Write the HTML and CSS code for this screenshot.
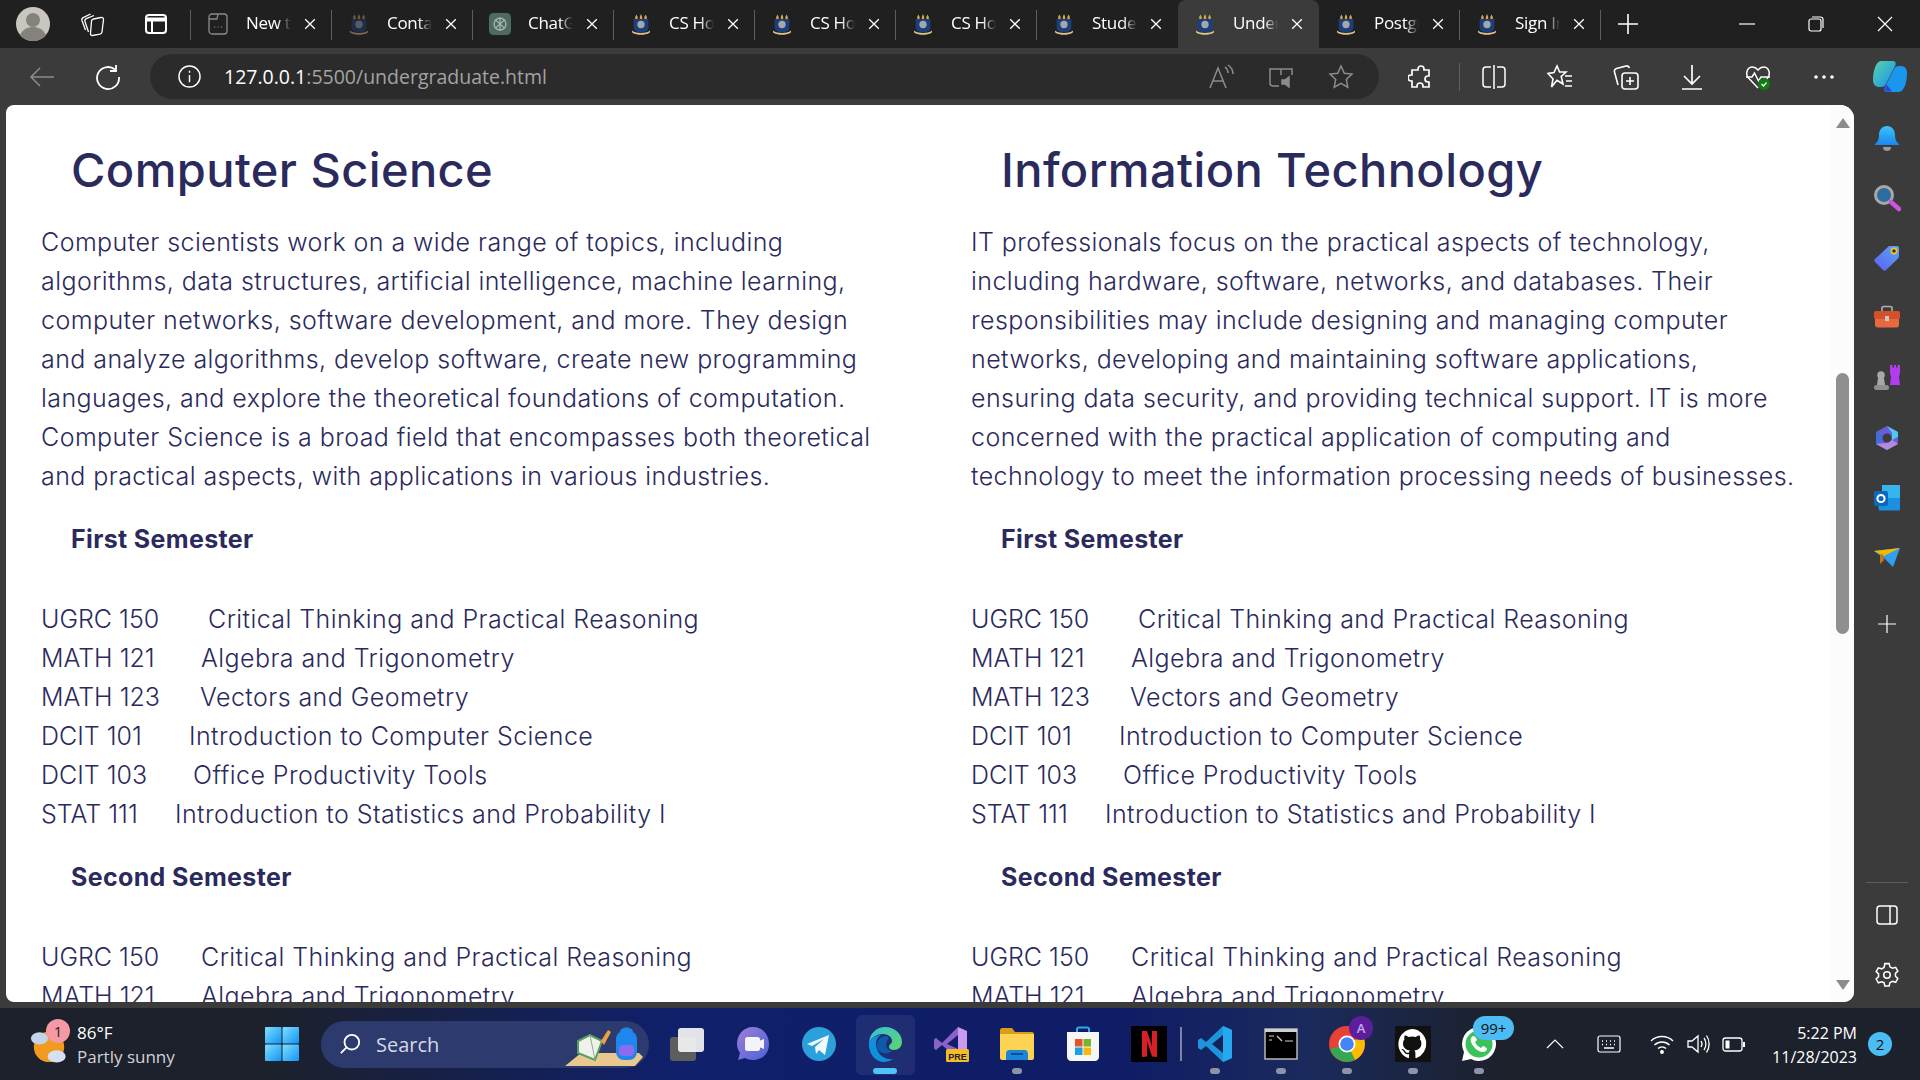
FILE: index.html
```html
<!DOCTYPE html>
<html lang="en">
<head>
<meta charset="utf-8">
<title>Undergraduate</title>
<link rel="stylesheet" href="styles.css">
</head>
<body>
<svg class="sprite" aria-hidden="true">
  <defs>
    <linearGradient id="gBell" x1="0" y1="0" x2="0" y2="1"><stop offset="0" stop-color="#3cc4f7"/><stop offset="1" stop-color="#1a86ee"/></linearGradient>
    <linearGradient id="gTag" x1="1" y1="0" x2="0" y2="1"><stop offset="0" stop-color="#5aa6f6"/><stop offset="1" stop-color="#5f5ff2"/></linearGradient>
    <linearGradient id="gWin" x1="0" y1="0" x2="1" y2="1"><stop offset="0" stop-color="#7fe0ff"/><stop offset="1" stop-color="#0f94f5"/></linearGradient>
    <linearGradient id="gEdge" x1="0" y1="0" x2="1" y2="1"><stop offset="0" stop-color="#35c1d8"/><stop offset="1" stop-color="#5ed66a"/></linearGradient>
    <linearGradient id="gZoom" x1="0" y1="0" x2="1" y2="1"><stop offset="0" stop-color="#9c7fd6"/><stop offset="1" stop-color="#4c62d8"/></linearGradient>
    <linearGradient id="gCop" x1="0" y1="0" x2="1" y2="1"><stop offset="0" stop-color="#56d6a8"/><stop offset="1" stop-color="#1b8cf0"/></linearGradient>
    <symbol id="crest" viewBox="0 0 24 24">
      <path d="M4 6.500h16v9.500c0 3-3.500 5-8 5s-8-2-8-5z" fill="#1c3f7c"/>
      <path d="M7 1.500l1.300 2.500v2.500H5.700V4zM12 1l1.300 3v2.500h-2.600V4zM17 1.500L18.300 4v2.500h-2.600V4z" fill="#d8a64a"/>
      <circle cx="12" cy="12.500" r="4" fill="#a0a8ac"/>
      <path d="M2 19c3 2 6 2.700 10 2.700S19 21 22 19l-.5 2.500c-3 1.500-6 2.200-9.500 2.200s-6.500-.7-9.500-2.200z" fill="#dcc48c"/>
    </symbol>
    <symbol id="x" viewBox="0 0 16 16"><path d="M2.500 2.500l11 11M13.500 2.500l-11 11" fill="none" stroke="#fff" stroke-width="1.500"/></symbol>
  </defs>
</svg>

<header class="tabstrip">
  <div class="lead">
    <span class="btn-avatar">
      <svg class="ic34" viewBox="0 0 34 34"><circle cx="17" cy="17" r="17" fill="#c9c6c0"/><circle cx="17" cy="13" r="7" fill="#85827d"/><path d="M4 28c3-6 8-8 13-8s10 2 13 8c-3 4-8 6-13 6s-10-2-13-6z" fill="#85827d"/></svg>
    </span>
    <span class="btn-work">
      <svg class="ic26" viewBox="0 0 26 26" fill="none" stroke="#fff" stroke-width="1.300"><path d="M13.500 8l7.500-1.500c1.500-.3 2.500.5 2.500 2L22 21c-.2 1.300-1 2-2 2.200L12.500 24.500c-1.300.2-2.200-.7-2-2L11.500 10c.1-1 1-1.800 2-2z"/><path d="M8.500 21L5 10.500c-.4-1.300.2-2.300 1.300-2.800L14 4.500"/><path d="M5.500 19L2 9.500c-.4-1.300.1-2.300 1.200-2.800L10.500 3"/></svg>
    </span>
    <span class="btn-vert">
      <svg class="ic24" viewBox="0 0 24 24" fill="none" stroke="#fff" stroke-width="2"><rect x="2" y="3" width="20" height="18" rx="3"/><path d="M2 7.500h20" stroke-width="4"/><path d="M8 8v13"/></svg>
    </span>
  </div>
  <div class="tab">
    <svg class="favicon" viewBox="0 0 20 24" fill="none" stroke="#8a8a8a" stroke-width="1.300"><rect x="1" y="2" width="18" height="20" rx="3"/><path d="M1 7h8l1-5"/><path d="M6 15h.8M9.600 15h.8M13.200 15h.8" stroke-width="1.600"/></svg>
    <span class="tab-title">New tab</span><svg class="tab-x" viewBox="0 0 16 16"><use href="#x"/></svg>
  </div>
  <div class="tab">
    <svg class="favicon dim" viewBox="0 0 24 24"><use href="#crest"/></svg>
    <span class="tab-title">Contact</span><svg class="tab-x" viewBox="0 0 16 16"><use href="#x"/></svg>
  </div>
  <div class="tab">
    <svg class="favicon" viewBox="0 0 24 24"><rect width="24" height="24" rx="5" fill="#4d6b60"/><g fill="none" stroke="#a9bab3" stroke-width="1.300"><circle cx="12" cy="12" r="6.500"/><path d="M7 7.500l10 9M17 7.500l-10 9M12 4.500v15"/></g></svg>
    <span class="tab-title">ChatGPT</span><svg class="tab-x" viewBox="0 0 16 16"><use href="#x"/></svg>
  </div>
  <div class="tab">
    <svg class="favicon" viewBox="0 0 24 24"><use href="#crest"/></svg>
    <span class="tab-title">CS Home</span><svg class="tab-x" viewBox="0 0 16 16"><use href="#x"/></svg>
  </div>
  <div class="tab">
    <svg class="favicon" viewBox="0 0 24 24"><use href="#crest"/></svg>
    <span class="tab-title">CS Home</span><svg class="tab-x" viewBox="0 0 16 16"><use href="#x"/></svg>
  </div>
  <div class="tab">
    <svg class="favicon" viewBox="0 0 24 24"><use href="#crest"/></svg>
    <span class="tab-title">CS Home</span><svg class="tab-x" viewBox="0 0 16 16"><use href="#x"/></svg>
  </div>
  <div class="tab before-active">
    <svg class="favicon" viewBox="0 0 24 24"><use href="#crest"/></svg>
    <span class="tab-title">Student</span><svg class="tab-x" viewBox="0 0 16 16"><use href="#x"/></svg>
  </div>
  <div class="tab active">
    <svg class="favicon" viewBox="0 0 24 24"><use href="#crest"/></svg>
    <span class="tab-title">Undergraduate</span><svg class="tab-x" viewBox="0 0 16 16"><use href="#x"/></svg>
  </div>
  <div class="tab">
    <svg class="favicon" viewBox="0 0 24 24"><use href="#crest"/></svg>
    <span class="tab-title">Postgraduate</span><svg class="tab-x" viewBox="0 0 16 16"><use href="#x"/></svg>
  </div>
  <div class="tab">
    <svg class="favicon" viewBox="0 0 24 24"><use href="#crest"/></svg>
    <span class="tab-title">Sign In</span><svg class="tab-x" viewBox="0 0 16 16"><use href="#x"/></svg>
  </div>
  <svg class="newtab" viewBox="0 0 22 22"><path d="M11 1v20M1 11h20" stroke="#fff" stroke-width="1.600"/></svg>
  <div class="winctl">
    <svg class="ic16" viewBox="0 0 16 16"><path d="M0 8h16" stroke="#fff" stroke-width="1.200"/></svg>
    <svg class="ic16" viewBox="0 0 16 16" fill="none" stroke="#fff" stroke-width="1.200"><rect x="1" y="3" width="12" height="12" rx="2"/><path d="M4 1h8.500A2.500 2.500 0 0 1 15 3.500V12"/></svg>
    <svg class="ic16" viewBox="0 0 16 16"><path d="M1 1l14 14M15 1L1 15" stroke="#fff" stroke-width="1.200"/></svg>
  </div>
</header>

<nav class="toolbar">
  <span class="tb"><svg class="ic26" viewBox="0 0 26 26" fill="none" stroke="#8c8c8c" stroke-width="1.500"><path d="M25 13H2M11 4l-9 9 9 9"/></svg></span>
  <span class="tb"><svg class="ic26" viewBox="0 0 26 26" fill="none" stroke="#fff" stroke-width="1.800"><path d="M20 5.500A11 11 0 1 0 24 13"/><path d="M21 1v6h-6"/></svg></span>
  <div class="address">
    <svg class="info" viewBox="0 0 24 24" fill="none" stroke="#fff" stroke-width="1.500"><circle cx="12" cy="12" r="11"/><path d="M12 10.500V18M12 6v2"/></svg>
    <span class="url"><span class="host">127.0.0.1</span>:5500/undergraduate.html</span>
    <span class="addr-btn"><svg class="ic26" viewBox="0 0 26 26" fill="none" stroke="#8c8c8c" stroke-width="1.500"><path d="M2 24L10 4l8 20M5 17h10M17 3c2 1.500 3 3.500 3 6M20 1c3 2 5 5 5 9"/></svg></span>
    <span class="addr-btn"><svg class="ic26" viewBox="0 0 26 26" fill="none" stroke="#8c8c8c" stroke-width="1.500"><path d="M11 22H5a3 3 0 0 1-3-3V5h22v6M13 5v6"/><path d="M14 16h3l4-3v10l-4-3h-3z" fill="#8c8c8c"/></svg></span>
    <span class="addr-btn"><svg class="ic26" viewBox="0 0 26 26" fill="none" stroke="#8c8c8c" stroke-width="1.500"><path d="M13 2l3.300 7.200 7.700.9-5.700 5.300 1.500 7.800L13 19.300 6.200 23.200l1.500-7.800L2 10.100l7.700-.9z"/></svg></span>
  </div>
  <span class="tb ext"><svg class="ic26" viewBox="0 0 26 26" fill="none" stroke="#fff" stroke-width="1.700"><path d="M10 5a3 3 0 0 1 6 0v1h5v6h-1a3 3 0 0 0 0 6h1v5h-6v-1a3 3 0 0 0-6 0v1H4v-6H3a3 3 0 0 1 0-6h1V6h6z"/></svg></span>
  <span class="tb-sep"></span>
  <span class="tb"><svg class="ic26" viewBox="0 0 26 26" fill="none" stroke="#fff" stroke-width="1.500"><path d="M10 3H5a3 3 0 0 0-3 3v14a3 3 0 0 0 3 3h5M16 3h5a3 3 0 0 1 3 3v14a3 3 0 0 1-3 3h-5M13 1v24"/></svg></span>
  <span class="tb"><svg class="ic26" viewBox="0 0 26 26" fill="none" stroke="#fff" stroke-width="1.600"><path d="M10 2l2.600 6H19l-4.800 4.500L16 20l-6-3.700L4.500 23l1.500-8L1 9.500l6-1zM18 12h7M19 17h6M18 22h7"/></svg></span>
  <span class="tb"><svg class="ic26" viewBox="0 0 26 26" fill="none" stroke="#fff" stroke-width="1.600"><rect x="9" y="9" width="16" height="16" rx="3"/><path d="M17 13v8M13 17h8M5 21L1.500 8C1 6 2 5 3.500 4.500L13 2c1.500-.3 3 .5 3.500 2"/></svg></span>
  <span class="tb"><svg class="ic26" viewBox="0 0 26 26" fill="none" stroke="#fff" stroke-width="1.700"><path d="M13 1v18M5 12l8 8 8-8M3 25h20"/></svg></span>
  <span class="tb"><svg class="ic26" viewBox="0 0 26 26"><path d="M13 24L3.500 14C0 10 2 3 7.500 3c2.500 0 4 1.200 5.500 3 1.500-1.800 3-3 5.500-3C24 3 26 10 22.500 14l-1 1" fill="none" stroke="#fff" stroke-width="1.500"/><path d="M1 13h6l2.500-4 4 8 2.500-4h9" fill="none" stroke="#fff" stroke-width="1.500"/><circle cx="19" cy="20" r="6" fill="#107c10"/><path d="M16.500 20l2 2 3-3.500" fill="none" stroke="#fff" stroke-width="1.200"/></svg></span>
  <span class="tb"><svg class="ic26" viewBox="0 0 26 26" fill="#fff"><circle cx="5" cy="13" r="1.800"/><circle cx="13" cy="13" r="1.800"/><circle cx="21" cy="13" r="1.800"/></svg></span>
  <span class="tb"><svg class="ic36" viewBox="0 0 36 36"><path d="M9 2h12c3 0 3 3 2 5l-9 18c-1 2-2 3-5 3H7c-4 0-6-3-6-7 0-9 3-19 8-19z" fill="url(#gCop)"/><path d="M27 33H15c-3 0-3-3-2-5l9-18c1-2 2-3 5-3h2c4 0 6 3 6 7 0 9-3 19-8 19z" fill="#1b96ee"/><path d="M14 25l6 7c-3 1-6 1-7-1z" fill="#2f46d8"/></svg></span>
</nav>

<div class="middle">
  <main class="page">
    <div class="cols">
      <section class="col">
        <h1>Computer Science</h1>
        <p class="intro">Computer scientists work on a wide range of topics, including<br>algorithms, data structures, artificial intelligence, machine learning,<br>computer networks, software development, and more. They design<br>and analyze algorithms, develop software, create new programming<br>languages, and explore the theoretical foundations of computation.<br>Computer Science is a broad field that encompasses both theoretical<br>and practical aspects, with applications in various industries.</p>
        <h3>First Semester</h3>
        <div class="course"><span class="code w167">UGRC 150</span>Critical Thinking and Practical Reasoning</div>
        <div class="course"><span class="code w160">MATH 121</span>Algebra and Trigonometry</div>
        <div class="course"><span class="code w159">MATH 123</span>Vectors and Geometry</div>
        <div class="course"><span class="code w148">DCIT 101</span>Introduction to Computer Science</div>
        <div class="course"><span class="code w152">DCIT 103</span>Office Productivity Tools</div>
        <div class="course"><span class="code w134">STAT 111</span>Introduction to Statistics and Probability I</div>
        <h3>Second Semester</h3>
        <div class="course"><span class="code w160">UGRC 150</span>Critical Thinking and Practical Reasoning</div>
        <div class="course"><span class="code w160">MATH 121</span>Algebra and Trigonometry</div>
      </section>
      <section class="col">
        <h1>Information Technology</h1>
        <p class="intro">IT professionals focus on the practical aspects of technology,<br>including hardware, software, networks, and databases. Their<br>responsibilities may include designing and managing computer<br>networks, developing and maintaining software applications,<br>ensuring data security, and providing technical support. IT is more<br>concerned with the practical application of computing and<br>technology to meet the information processing needs of businesses.</p>
        <h3>First Semester</h3>
        <div class="course"><span class="code w167">UGRC 150</span>Critical Thinking and Practical Reasoning</div>
        <div class="course"><span class="code w160">MATH 121</span>Algebra and Trigonometry</div>
        <div class="course"><span class="code w159">MATH 123</span>Vectors and Geometry</div>
        <div class="course"><span class="code w148">DCIT 101</span>Introduction to Computer Science</div>
        <div class="course"><span class="code w152">DCIT 103</span>Office Productivity Tools</div>
        <div class="course"><span class="code w134">STAT 111</span>Introduction to Statistics and Probability I</div>
        <h3>Second Semester</h3>
        <div class="course"><span class="code w160">UGRC 150</span>Critical Thinking and Practical Reasoning</div>
        <div class="course"><span class="code w160">MATH 121</span>Algebra and Trigonometry</div>
      </section>
    </div>
    <div class="scrollbar">
      <span class="arrow-up"></span>
      <span class="thumb"></span>
      <span class="arrow-down"></span>
    </div>
  </main>
  <aside class="sidebar">
    <span class="side"><svg class="ic28" viewBox="0 0 28 28"><path d="M14 2c5 0 8 4 8 9 0 4 1 7 4 9v1H2v-1c3-2 4-5 4-9 0-5 3-9 8-9z" fill="url(#gBell)"/><path d="M10 23h8c0 3-2 4-4 4s-4-1-4-4z" fill="#9a9a9a"/></svg></span>
    <span class="side"><svg class="ic28" viewBox="0 0 28 28"><circle cx="11" cy="11" r="8.500" fill="#2d6c9e" stroke="#a8a8a8" stroke-width="3"/><path d="M18 18l8 7" stroke="#d052e0" stroke-width="4.500" stroke-linecap="round"/></svg></span>
    <span class="side"><svg class="ic28" viewBox="0 0 28 28"><path d="M16 2h8c1.500 0 2 1 2 2v8c0 1-.5 2-1.500 3L13 26c-1 1-2 1-3 0l-8-8c-1-1-1-2 0-3z" fill="url(#gTag)"/><circle cx="21" cy="7" r="2.600" fill="#333" stroke="#f5c518" stroke-width="1.600"/></svg></span>
    <span class="side"><svg class="ic28" viewBox="0 0 28 28"><path d="M9 7V4c0-1 1-1.500 2-1.500h6c1 0 2 .5 2 1.500v3" fill="none" stroke="#b0b0b0" stroke-width="1.600"/><rect x="1" y="7" width="26" height="8" rx="1.500" fill="#d2502a"/><path d="M2 15h24v6c0 1.500-1 2.500-2.500 2.500h-19C3 23.500 2 22.500 2 21z" fill="#e8693e"/><rect x="12" y="12" width="4" height="5" fill="#c8c8c8"/></svg></span>
    <span class="side"><svg class="ic28" viewBox="0 0 28 28"><path d="M17 1h2.500v2.500H21V1h2v2.500h1.500V1H27v8l-1 4 1 8H17l1-8-1-4z" fill="#b23cf0"/><circle cx="8" cy="11" r="3.800" fill="#a8a8a8"/><path d="M5 14h6l1 7H4z" fill="#a8a8a8"/><rect x="1" y="21" width="15" height="5" rx="2.500" fill="#8f8f8f"/></svg></span>
    <span class="side"><svg class="ic28" viewBox="0 0 28 28"><path d="M14 2l11 6v12l-11 6-11-6V8z" fill="#6a5ed8"/><path d="M14 2l11 6v5l-6 3V9z" fill="#50c8ee"/><path d="M3 20l11 6 11-6-6-4-5 3z" fill="#b48ae0"/><path d="M3 8l6 3v5l-6 4z" fill="#3d6fd8"/><circle cx="14" cy="14" r="4.500" fill="#3b3b3b"/></svg></span>
    <span class="side"><svg class="ic28" viewBox="0 0 28 28"><rect x="9" y="1" width="18" height="14" fill="#35b4ee"/><path d="M4 14h23v11c0 1-.5 1.500-1.500 1.500H6z" fill="#1b8fe0"/><rect x="1" y="7" width="14" height="15" rx="2" fill="#0a68c0"/><circle cx="8" cy="14.500" r="3.600" fill="none" stroke="#fff" stroke-width="2"/></svg></span>
    <span class="side"><svg class="ic28" viewBox="0 0 28 28"><path d="M1 7l26-3-7 19-8-8z" fill="#2f9ff0"/><path d="M1 7l26-3-16 8z" fill="#f5b800"/><path d="M7 11l3-1 1 6-4 4z" fill="#c77810"/></svg></span>
    <span class="side side-add"><svg class="ic18" viewBox="0 0 18 18"><path d="M9 0v18M0 9h18" stroke="#fff" stroke-width="1.200"/></svg></span>
    <span class="side-spacer"></span>
    <span class="side-rule"></span>
    <span class="side"><svg class="ic22" viewBox="0 0 22 22" fill="none" stroke="#fff" stroke-width="1.500"><rect x="1" y="2" width="20" height="18" rx="3"/><path d="M14 2v18"/></svg></span>
    <span class="side"><svg class="ic26" viewBox="0 0 24 24" fill="none" stroke="#fff" stroke-width="1.400"><circle cx="12" cy="12" r="3"/><path d="M10 1.500h4l.7 3 2.300 1.300 3-.9 2 3.500-2.200 2.100v2.600l2.200 2.100-2 3.500-3-.9-2.300 1.300-.7 3h-4l-.7-3L7 18.300l-3 .9-2-3.500 2.200-2.100v-2.600L2 8.900l2-3.500 3 .9 2.300-1.300z"/></svg></span>
  </aside>
</div>

<footer class="taskbar">
  <div class="weather">
    <span class="wx-icon">
      <svg class="wx-svg" viewBox="0 0 40 42"><circle cx="20" cy="23" r="16" fill="#f09a20"/><ellipse cx="10" cy="14" rx="9" ry="6.500" fill="#c5d3e8"/><ellipse cx="28" cy="33" rx="9.500" ry="6.500" fill="#d5e0f0"/></svg>
      <span class="wx-badge">1</span>
    </span>
    <span class="wx-text"><span class="wx-temp">86°F</span><span class="wx-desc">Partly sunny</span></span>
  </div>
  <span class="tk"><svg class="ic36" viewBox="0 0 36 36"><g fill="url(#gWin)"><rect x="1" y="1" width="16.500" height="16.500" rx="1"/><rect x="18.500" y="1" width="16.500" height="16.500" rx="1"/><rect x="1" y="18.500" width="16.500" height="16.500" rx="1"/><rect x="18.500" y="18.500" width="16.500" height="16.500" rx="1"/></g></svg></span>
  <div class="search">
    <svg class="search-ic" viewBox="0 0 24 24" fill="none" stroke="#fff" stroke-width="2"><circle cx="14" cy="10" r="8"/><path d="M8 16l-6 6"/></svg>
    <span class="search-label">Search</span>
    <svg class="search-art" viewBox="0 0 78 39"><path d="M0 39l16-13h58l4 4-8 9z" fill="#e8c88e"/><path d="M13 14l12-6 12 6-7 19-17-7z" fill="#eef2e8" stroke="#55a060" stroke-width="2"/><path d="M25 8l5 25" stroke="#9aa89a" stroke-width="1"/><path d="M36 14l7-11 3 2-7 13z" fill="#f0a040"/><path d="M55 5c0-6 13-6 13 0" fill="#1f86ee"/><rect x="51" y="4" width="21" height="29" rx="8" fill="#1f86ee"/><rect x="54" y="18" width="15" height="11" rx="4" fill="#8a6cf0"/></svg>
  </div>
  <span class="tk"><svg class="ic36" viewBox="0 0 36 36"><rect x="1" y="11" width="26" height="24" rx="3" fill="#5d5d5d"/><rect x="9" y="2" width="26" height="24" rx="3" fill="#f4f4f4" opacity=".92"/></svg></span>
  <span class="tk"><svg class="ic36" viewBox="0 0 36 36"><path d="M18 1c10 0 16 8 16 17s-6 16-16 16c-3 0-6-.7-8-2l-7 2 2-7C3 24 2 21 2 18 2 9 8 1 18 1z" fill="url(#gZoom)"/><rect x="10" y="11" width="15" height="14" rx="2.500" fill="#f4f4f8"/><path d="M24 15l5-2v10l-5-2z" fill="#f4f4f8"/></svg></span>
  <span class="tk"><svg class="ic36" viewBox="0 0 36 36"><circle cx="18" cy="18" r="17" fill="#2aa1da"/><path d="M6 18L28 9l-4 20-6-5-3 4-1-7 9-8-12 7z" fill="#f2f8fc"/></svg></span>
  <span class="tk tk-active"><svg class="ic36" viewBox="0 0 36 36"><path d="M2 16C3 7 10 1 18 1c10 0 17 7 17 15 0 5-4 8-8 8-3 0-5-1-5-3 0-3 3-3 3-6 0-4-4-7-9-7-6 0-11 3-14 8z" fill="url(#gEdge)"/><path d="M2 16c3-5 8-7 12-7-5 3-6 8-4 14 2 7 9 11 16 10-3 2-6 3-9 3C8 36 1 27 2 16z" fill="#0f8fdc"/><path d="M10 20c0-6 4-10 9-10 3 0 3 3 1 5-2 3-1 9 5 10-5 4-15 3-15-5z" fill="#0c5aa8"/></svg><span class="dot-active"></span></span>
  <span class="tk"><svg class="ic36" viewBox="0 0 36 36"><path d="M25 1L9 17 3 12l-2 1.500v9L3 24l6-5 16 14V23l-11-5 11-9z" fill="#8c62c8"/><path d="M25 1l9 4v26l-9 4z" fill="#c89af0"/><rect x="13" y="23" width="23" height="13" rx="1.500" fill="#f5bc2a"/><text class="pre" x="24.500" y="33.500" text-anchor="middle">PRE</text></svg></span>
  <span class="tk"><svg class="ic36" viewBox="0 0 36 36"><path d="M1 4c0-1 1-2 2-2h10l3 4h17c1 0 2 1 2 2v4H1z" fill="#d89e18"/><path d="M1 8h34v24c0 1-1 2-2 2H3c-1 0-2-1-2-2z" fill="#fdd353"/><path d="M7 34v-6c0-2 1-4 3-4h16c2 0 3 2 3 4v6z" fill="#1a86d8"/><path d="M12 28h12" stroke="#0c4f90" stroke-width="2"/></svg><span class="dot"></span></span>
  <span class="tk"><svg class="ic36" viewBox="0 0 36 36"><path d="M12 6V3c0-1 1-1.500 2-1.500h8c1 0 2 .5 2 1.500v3" fill="none" stroke="#2ea8e8" stroke-width="2"/><path d="M2 6h32v25c0 2-2 4-4 4H6c-2 0-4-2-4-4z" fill="#f6f6f6"/><rect x="10" y="13" width="7.500" height="7.500" fill="#e8522a"/><rect x="18.500" y="13" width="7.500" height="7.500" fill="#7ab42a"/><rect x="10" y="21.500" width="7.500" height="7.500" fill="#18a0e8"/><rect x="18.500" y="21.500" width="7.500" height="7.500" fill="#f8b808"/></svg></span>
  <span class="tk tk-rule"><svg class="ic36" viewBox="0 0 36 36"><rect width="36" height="36" fill="#000"/><path d="M11 5h5l5 15V5h5v26l-5-.6L16 15v15.500l-5 .5z" fill="#d81f26"/></svg></span>
  <span class="tk"><svg class="ic36" viewBox="0 0 36 36"><path d="M26 0l9 4v28l-9 4L9 20l-5 4-3-2v-8l3-2 5 4z" fill="#1d94dc"/><path d="M26 9L15 18l11 9z" fill="#132257"/><path d="M26 0l9 4v28l-9 4z" fill="#26a8f0"/></svg><span class="dot"></span></span>
  <span class="tk"><svg class="ic36" viewBox="0 0 36 36"><rect x="2" y="3" width="32" height="30" fill="#000" stroke="#b8b8b8" stroke-width="1.500"/><rect x="2" y="3" width="32" height="3" fill="#cfcfcf"/><path d="M6 10h5M14 10l5 5M6 14h3M22 15h8" stroke="#d0d0d0" stroke-width="1.200" fill="none"/></svg><span class="dot"></span></span>
  <span class="tk"><span class="badged"><svg class="ic36" viewBox="0 0 36 36"><circle cx="18" cy="18" r="18" fill="#e94235"/><path d="M18 18L34 10a18 18 0 0 1-8 24z" fill="#fbbc04"/><path d="M18 18l8 16A18 18 0 0 1 1 23z" fill="#34a853"/><circle cx="18" cy="18" r="8.500" fill="#fff"/><circle cx="18" cy="18" r="6.800" fill="#4285f4"/></svg><span class="chrome-badge">A</span></span><span class="dot"></span></span>
  <span class="tk"><svg class="ic36" viewBox="0 0 36 36"><rect width="36" height="36" fill="#111"/><path d="M18 3a15 15 0 0 0-5 29c1 .2 1-.4 1-1v-3c-4 1-5-2-5-2-1-2-2-2-2-2-1-1 0-1 0-1 2 0 3 2 3 2 1 2 3 2 4 1.500 0-1 .5-1.500 1-2-3-.5-7-2-7-7 0-2 .5-3 1.500-4-.2-.4-.6-2 .2-4 0 0 1.300-.4 4 1.500a13 13 0 0 1 7 0c2.700-1.900 4-1.500 4-1.500.8 2 .4 3.600.2 4 1 1 1.500 2 1.500 4 0 5-4 6.500-7 7 .5.5 1 1.300 1 2.500v4c0 .6 0 1.200 1 1A15 15 0 0 0 18 3z" fill="#fff"/></svg><span class="dot"></span></span>
  <span class="tk"><span class="badged"><svg class="ic36" viewBox="0 0 36 36"><path d="M18 1a17 17 0 0 0-15 25L1 35l9-2A17 17 0 1 0 18 1z" fill="#fff"/><circle cx="18" cy="18" r="13.500" fill="#3cc25a"/><path d="M12 10c-2 1-3 3-2 6 2 5 6 9 11 10 3 0 5-1 5-3 0-1-3-3-4-3l-2 2c-2-1-5-3-6-6l2-2c0-1-2-4-4-4z" fill="#fff"/></svg><span class="wa-badge">99+</span></span><span class="dot"></span></span>
  <span class="tray tray-first"><svg class="ic18" viewBox="0 0 18 18" fill="none" stroke="#fff" stroke-width="1.200"><path d="M1 13l8-8 8 8"/></svg></span>
  <span class="tray"><svg class="ic24" viewBox="0 0 24 24" fill="none" stroke="#fff" stroke-width="1.200"><rect x="1" y="4" width="22" height="16" rx="2"/><path d="M5 9h1M9 9h1M13 9h1M17 9h1M5 12.500h1M9 12.500h1M13 12.500h1M17 12.500h1M7 16h10" stroke-width="1.400"/></svg></span>
  <div class="net">
    <span class="netc"><svg class="ic24" viewBox="0 0 24 24" fill="none" stroke="#fff" stroke-width="1.500"><path d="M1 9a16 16 0 0 1 22 0M4.500 13a11 11 0 0 1 15 0M8 16.500a6 6 0 0 1 8 0"/><circle cx="12" cy="20" r="1.200" fill="#fff"/></svg></span>
    <span class="netc"><svg class="ic24" viewBox="0 0 24 24" fill="none" stroke="#fff" stroke-width="1.300"><path d="M2 9v6h4l6 5V4L6 9zM15 9c1.200 1.800 1.200 4.200 0 6M18 6c2.500 3.500 2.500 8.500 0 12M20.500 3.500c3.500 5 3.500 12 0 17"/></svg></span>
    <span class="netc"><svg class="ic24" viewBox="0 0 24 24" fill="none" stroke="#fff" stroke-width="1.300"><rect x="1" y="6" width="19" height="13" rx="2.500"/><path d="M22 10v5" stroke-width="2"/><rect x="3.500" y="8.500" width="4" height="8" fill="#fff" stroke="none"/></svg></span>
  </div>
  <div class="clock"><span>5:22 PM</span><span>11/28/2023</span></div>
  <span class="notif">2</span>
</footer>
</body>
</html>
```

FILE: styles.css
```css
* { box-sizing: border-box; }
html, body { margin: 0; padding: 0; }
body {
  width: 1920px;
  height: 1080px;
  overflow: hidden;
  display: flex;
  flex-direction: column;
  background: #3b3b3b;
  font-family: "Open Sans", "Noto Sans", sans-serif;
  color: #fff;
}
svg { display: block; flex: none; }
.sprite { position: absolute; width: 0; height: 0; }
.ic16 { width: 16px; height: 16px; }
.ic18 { width: 18px; height: 18px; }
.ic22 { width: 22px; height: 22px; }
.ic24 { width: 24px; height: 24px; }
.ic26 { width: 26px; height: 26px; }
.ic28 { width: 28px; height: 28px; }
.ic34 { width: 34px; height: 34px; }
.ic36 { width: 36px; height: 36px; }

/* tab strip */
.tabstrip { height: 48px; flex: none; display: flex; align-items: stretch; background: #202020; }
.lead { width: 191px; flex: none; display: flex; align-items: center; position: relative; }
.lead::after { content: ""; position: absolute; right: 0; top: 10px; height: 30px; width: 1px; background: #5e5e5e; }
.btn-avatar { width: 66px; display: flex; justify-content: center; }
.btn-work { width: 54px; display: flex; justify-content: center; }
.btn-vert { width: 71px; display: flex; justify-content: center; }
.tab { width: 141px; flex: none; display: flex; align-items: center; padding-left: 16px; position: relative; }
.tab::after { content: ""; position: absolute; right: 0; top: 10px; height: 30px; width: 1px; background: #5e5e5e; }
.tab.active { background: #3b3b3b; border-radius: 8px 8px 0 0; }
.tab.active::after, .tab.before-active::after { display: none; }
.favicon { width: 22px; height: 24px; }
.dim { opacity: .45; }
.tab-title {
  width: 45px;
  margin: -3px 0 0 17px;
  font-size: 17px;
  letter-spacing: -.3px;
  white-space: nowrap;
  overflow: hidden;
  -webkit-mask-image: linear-gradient(to right, #000 70%, transparent);
  mask-image: linear-gradient(to right, #000 70%, transparent);
}
.tab-x { width: 14px; height: 14px; margin-left: 12px; }
.newtab { width: 22px; height: 22px; margin: 13px 0 0 16px; }
.winctl { margin-left: 100px; display: flex; align-items: center; gap: 53px; }

/* toolbar */
.toolbar { height: 57px; flex: none; display: flex; align-items: center; padding-left: 9px; background: #3b3b3b; }
.tb { width: 66px; flex: none; display: flex; justify-content: center; }
.tb.ext { margin-left: 9px; }
.tb-sep { width: 1px; height: 28px; margin: 0 1px 0 5px; flex: none; background: #5e5e5e; }
.address {
  width: 1229px;
  height: 45px;
  margin-left: 9px;
  flex: none;
  display: flex;
  align-items: center;
  padding: 0 8px 0 28px;
  background: #2b2b2b;
  border-radius: 23px;
}
.info { width: 23px; height: 23px; }
.url { flex: 1; margin-left: 23px; font-size: 19.5px; color: #a3a3a3; white-space: nowrap; }
.host { color: #fff; }
.addr-btn { width: 60px; flex: none; display: flex; justify-content: center; }

/* middle */
.middle { height: 903px; flex: none; display: flex; padding: 0 0 0 6px; background: #3b3b3b; }
.page {
  width: 1848px;
  height: 897px;
  flex: none;
  position: relative;
  overflow: hidden;
  background: #fff;
  border-radius: 8px 14px 10px 8px;
  color: #2b2a5c;
  font-family: Inter, "Noto Sans", sans-serif;
}
.cols { display: grid; grid-template-columns: 930px 930px; padding: 38px 0 0 35px; }
h1 { margin: 0 0 26px; padding-left: 30px; font-size: 47px; line-height: 54px; font-weight: 500; letter-spacing: .4px; }
.intro { margin: 0 0 28px; font-size: 25px; line-height: 39px; white-space: nowrap; font-weight: 300; letter-spacing: .43px; }
h3 { margin: 0 0 46px; padding-left: 30px; font-size: 25px; line-height: 30px; font-weight: 700; letter-spacing: .35px; }
.course + h3 { margin-top: 28px; }
.course { display: flex; font-size: 25px; line-height: 39px; white-space: nowrap; font-weight: 300; letter-spacing: .43px; }
.code { flex: none; letter-spacing: 0; }
.w134 { width: 134px; }
.w148 { width: 148px; }
.w152 { width: 152px; }
.w159 { width: 159px; }
.w160 { width: 160px; }
.w167 { width: 167px; }
.scrollbar { position: absolute; top: 0; right: 0; bottom: 0; width: 23px; background: #fcfcfc; }
.thumb { position: absolute; left: 5px; top: 268px; width: 13px; height: 261px; border-radius: 7px; background: #8f8f8f; }
.arrow-up { position: absolute; left: 5px; top: 13px; border: 7px solid transparent; border-top: 0; border-bottom: 10px solid #8c8c8c; }
.arrow-down { position: absolute; left: 5px; top: 875px; border: 7px solid transparent; border-bottom: 0; border-top: 10px solid #8c8c8c; }

/* sidebar */
.sidebar { width: 66px; flex: none; display: flex; flex-direction: column; align-items: center; padding: 3px 0; }
.side { height: 60px; flex: none; display: flex; align-items: center; justify-content: center; }
.side-add { margin-top: 6px; }
.side-spacer { flex: 1; }
.side-rule { width: 42px; height: 1px; flex: none; margin-bottom: 2px; background: #5e5e5e; }

/* taskbar */
.taskbar {
  height: 72px;
  flex: none;
  display: flex;
  align-items: center;
  background: linear-gradient(to right, #1c212c 0%, #1c212c 14%, #10206a 35%, #0f1c66 58%, #1a2a5c 68%, #1c212c 78%, #1c212c 100%);
}
.weather { width: 249px; flex: none; display: flex; align-items: center; padding-left: 30px; }
.wx-icon { position: relative; width: 38px; height: 42px; flex: none; }
.wx-svg { width: 38px; height: 40px; margin-top: 2px; }
.wx-badge {
  position: absolute; left: 16px; top: -4px; width: 24px; height: 24px; border-radius: 50%;
  background: #f59aa4; color: #222; font-size: 15px; line-height: 24px; text-align: center;
}
.wx-text { display: flex; flex-direction: column; margin: 2px 0 0 9px; font-size: 17px; line-height: 24px; white-space: nowrap; }
.wx-temp { color: #fff; }
.wx-desc { color: #d0d3da; }
.tk { width: 66px; height: 72px; flex: none; display: flex; align-items: center; justify-content: center; position: relative; }
.tk-active::before {
  content: ""; position: absolute; left: 4px; top: 7px; width: 59px; height: 60px; border-radius: 6px;
  background: rgba(255,255,255,.07);
}
.tk-active svg { position: relative; }
.tk-rule::after { content: ""; position: absolute; right: 0; top: 19px; height: 34px; width: 2px; background: #7d84a8; }
.dot, .dot-active { position: absolute; bottom: 6px; left: 50%; height: 6px; border-radius: 3px; }
.dot { width: 10px; margin-left: -5px; background: #8d93a8; }
.dot-active { width: 24px; margin-left: -12px; background: #4fc3f7; }
.search {
  width: 328px; height: 47px; margin: 0 5px 0 6px; flex: none; display: flex; align-items: center;
  padding-left: 18px; border-radius: 24px; position: relative;
  background: #2d3a6e; color: #d5d8e4;
}
.search-ic { width: 22px; height: 22px; }
.search-label { margin-left: 15px; font-size: 20px; }
.search-art { position: absolute; right: 6px; top: 6px; width: 78px; height: 39px; }
.pre { font: 700 9px "Liberation Sans", sans-serif; fill: #222; }
.badged { position: relative; display: block; width: 36px; height: 36px; }
.chrome-badge {
  position: absolute; left: 20px; top: -10px; width: 24px; height: 24px; border-radius: 50%;
  background: #5c1e9c; color: #c8a8e8; font-size: 13px; line-height: 24px; text-align: center; font-weight: 600;
}
.wa-badge {
  position: absolute; left: 12px; top: -10px; width: 41px; height: 24px; border-radius: 12px;
  background: #4cbcf5; color: #111; font-size: 15px; line-height: 24px; text-align: center;
}
.tray { width: 54px; flex: none; display: flex; justify-content: center; }
.tray-first { margin-left: 16px; }
.net { display: flex; flex: none; margin-left: 8px; }
.netc { width: 36px; display: flex; justify-content: center; }
.clock { width: 105px; flex: none; display: flex; flex-direction: column; align-items: flex-end; margin-top: 2px; font-size: 16px; line-height: 24px; white-space: nowrap; }
.notif {
  width: 24px; height: 24px; margin-left: 11px; flex: none; border-radius: 50%;
  background: #4cbcf5; color: #111; font-size: 15px; line-height: 24px; text-align: center;
}
```
